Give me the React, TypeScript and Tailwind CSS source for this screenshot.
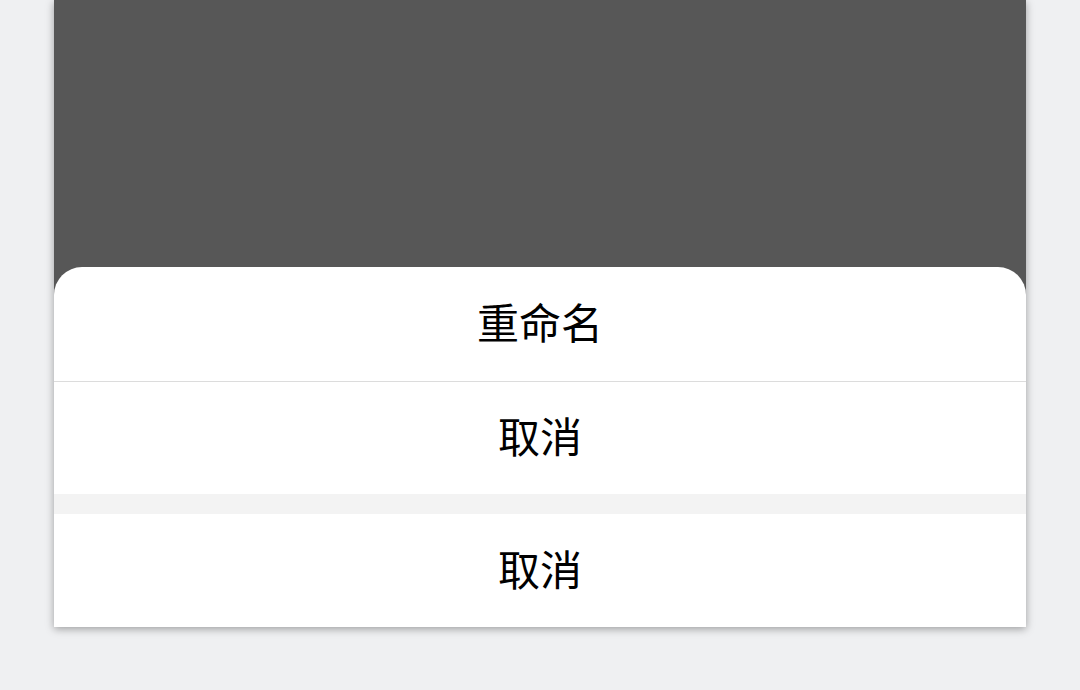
export default function App() {
  const font = { fontFamily: '"Noto Sans CJK SC", "Noto Sans", sans-serif' };
  return (
    <div className="w-[1080px] h-[690px] bg-[#eff0f2] overflow-hidden" style={font}>
      <div className="ml-[54px] w-[972px] h-[627px] flex flex-col bg-[#575757] shadow-[0_2px_8px_rgba(0,0,0,0.35)]">
        <div className="h-[267px] shrink-0" />
        <div className="flex-1 flex flex-col bg-white rounded-t-[28px] overflow-hidden">
          <div className="h-[114px] pb-[6px] flex items-center justify-center text-[42px] text-black leading-none">重命名</div>
          <div className="h-px bg-[#dcdcdc]" />
          <div className="h-[112px] pb-[6px] flex items-center justify-center text-[42px] text-black leading-none">取消</div>
          <div className="h-[20px] bg-[#f3f3f3]" />
          <div className="h-[113px] pb-[6px] flex items-center justify-center text-[42px] text-black leading-none">取消</div>
        </div>
      </div>
    </div>
  );
}
